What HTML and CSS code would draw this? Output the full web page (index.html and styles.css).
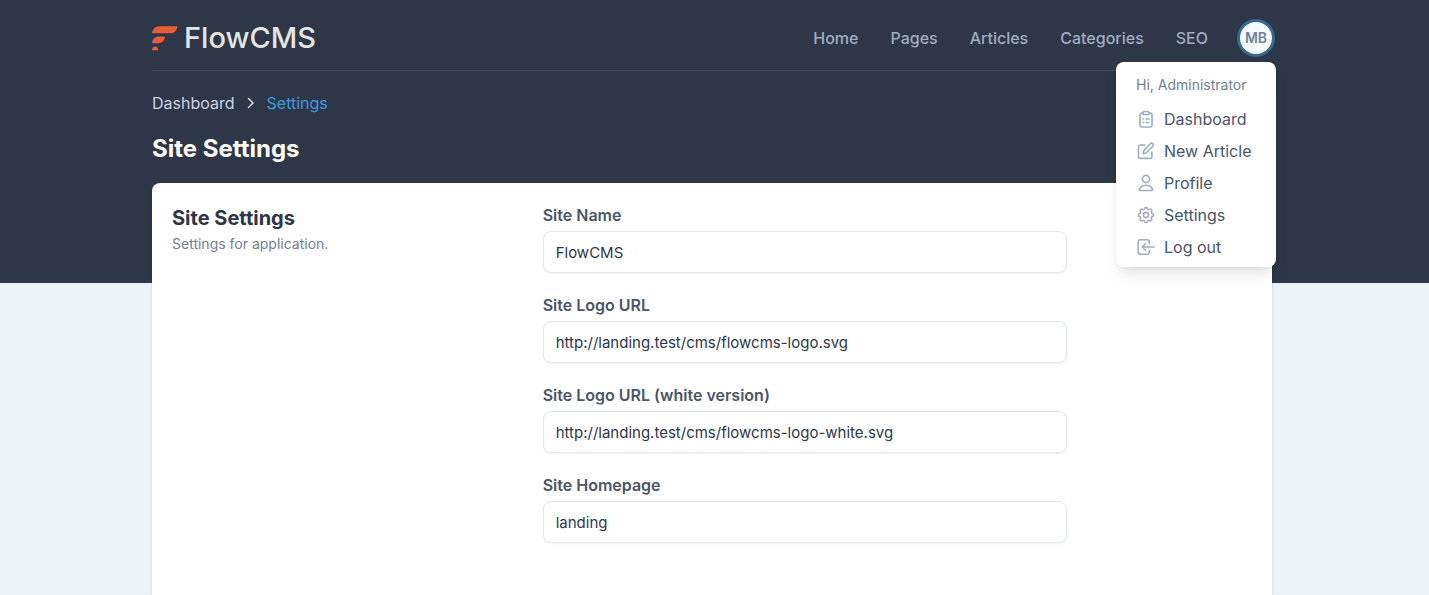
FILE: index.html
```html
<!DOCTYPE html>
<html lang="en">
<head>
<meta charset="utf-8">
<meta name="viewport" content="width=device-width, initial-scale=1">
<title>Site Settings - FlowCMS</title>
<link rel="stylesheet" href="styles.css">
</head>
<body>
<header class="masthead">
  <div class="container">
    <div class="topbar">
      <a class="brand" href="#">
        <svg class="brand-mark" viewBox="0 0 26 25" aria-hidden="true"><path d="M0 7.2C.6 3 3.2.2 7 .2H25.300C25 4.600 22.500 7.200 18.500 7.200ZM0 17.200C.6 13 3.200 10.400 7 10.400H13C12.500 14.700 10 17.200 6 17.200ZM0 24.200C0 22 1.200 20.600 3.200 20.600S6.200 22 6.200 24.200Z"/></svg>
        <span>FlowCMS</span>
      </a>
      <nav class="nav" aria-label="Main">
        <a href="#">Home</a>
        <a href="#">Pages</a>
        <a href="#">Articles</a>
        <a href="#">Categories</a>
        <a href="#">SEO</a>
        <div class="account">
          <button class="avatar" type="button" aria-label="Account menu" aria-expanded="true">MB</button>
          <div class="menu">
            <p class="menu-greeting">Hi, Administrator</p>
            <a href="#"><svg viewBox="0 0 18 18" aria-hidden="true"><path d="M6 3H5a2 2 0 0 0-2 2v10a2 2 0 0 0 2 2h8a2 2 0 0 0 2-2V5a2 2 0 0 0-2-2h-1M7.500 1.500h3A1.500 1.500 0 0 1 12 3v1.500H6V3a1.500 1.500 0 0 1 1.500-1.500ZM6 9h.5M9 9h3M6 12.500h.5M9 12.500h3"/></svg>Dashboard</a>
            <a href="#"><svg viewBox="0 0 18 18" aria-hidden="true"><path d="M8 3H3.200A1.700 1.700 0 0 0 1.500 4.700v10A1.700 1.700 0 0 0 3.200 16.400h10a1.700 1.700 0 0 0 1.700-1.700V10M13.300 1.800a1.700 1.700 0 0 1 2.500 2.500L9.200 11l-3 .8.700-3.200Z"/></svg>New Article</a>
            <a href="#"><svg viewBox="0 0 18 18" aria-hidden="true"><circle cx="9" cy="5" r="3.600"/><path d="M2.500 16.500c0-3.500 2.500-5.300 6.500-5.300s6.500 1.800 6.500 5.300Z"/></svg>Profile</a>
            <a href="#"><svg viewBox="0 0 18 18" aria-hidden="true"><path d="M7.600 2.500c.4-1.500 2.400-1.500 2.800 0 .2 1 1.300 1.400 2.200.9 1.300-.8 2.800.7 2 2-.5.900-.1 2 .9 2.200 1.500.4 1.500 2.400 0 2.800-1 .2-1.400 1.300-.9 2.200.8 1.300-.7 2.800-2 2-.9-.5-2-.1-2.200.9-.4 1.500-2.400 1.500-2.800 0-.2-1-1.300-1.400-2.200-.9-1.300.8-2.800-.7-2-2 .5-.9.100-2-.9-2.200-1.500-.4-1.500-2.400 0-2.800 1-.2 1.400-1.300.9-2.200-.8-1.300.7-2.800 2-2 .9.500 2 .1 2.200-.9Z"/><circle cx="9" cy="9" r="2.600"/></svg>Settings</a>
            <a href="#"><svg viewBox="0 0 18 18" aria-hidden="true"><path d="M12.300 5.500V4a2.300 2.300 0 0 0-2.300-2.300H3.500A2.300 2.300 0 0 0 1.200 4v10a2.300 2.300 0 0 0 2.300 2.300H10a2.300 2.300 0 0 0 2.300-2.300v-1.500M17 9H5.500M8.500 5.800 5.300 9l3.200 3.200"/></svg>Log out</a>
          </div>
        </div>
      </nav>
    </div>
    <nav class="breadcrumb" aria-label="Breadcrumb">
      <a href="#">Dashboard</a>
      <svg viewBox="0 0 8 12" aria-hidden="true"><path d="m1.500 1.500 4.500 4.500-4.500 4.500"/></svg>
      <a href="#" class="current" aria-current="page">Settings</a>
    </nav>
    <h1>Site Settings</h1>
  </div>
</header>
<main class="content">
  <section class="card">
    <div class="intro">
      <h2>Site Settings</h2>
      <p>Settings for application.</p>
    </div>
    <form class="fields">
      <div class="field">
        <label for="site-name">Site Name</label>
        <input id="site-name" type="text" value="FlowCMS">
      </div>
      <div class="field">
        <label for="logo-url">Site Logo URL</label>
        <input id="logo-url" type="text" value="http://landing.test/cms/flowcms-logo.svg">
      </div>
      <div class="field">
        <label for="logo-white">Site Logo URL (white version)</label>
        <input id="logo-white" type="text" value="http://landing.test/cms/flowcms-logo-white.svg">
      </div>
      <div class="field">
        <label for="homepage">Site Homepage</label>
        <input id="homepage" type="text" value="landing">
      </div>
    </form>
  </section>
</main>
</body>
</html>
```
FILE: styles.css
```css
* { box-sizing: border-box; }

html, body { height: 100%; }

body {
  margin: 0;
  display: flex;
  flex-direction: column;
  overflow: hidden;
  background: #edf2f7;
  color: #2d3748;
  font: 16px/24px Inter, "Liberation Sans", sans-serif;
}

h1, h2, p { margin: 0; }
a { color: inherit; text-decoration: none; }

.masthead, .content { padding-right: 5px; }

.masthead {
  background: #2d3748;
  padding-bottom: 118px;
}

.container,
.card {
  width: 100%;
  max-width: 1120px;
  margin: 0 auto;
}

.topbar {
  display: flex;
  align-items: center;
  justify-content: space-between;
  height: 71px;
  padding-top: 6px;
  border-bottom: 1px solid #3c475a;
}

.brand {
  display: flex;
  align-items: center;
  gap: 6px;
  color: #e5e5e5;
  font-size: 29px;
  font-weight: 500;
  line-height: 36px;
}
.brand-mark { width: 26px; height: 25px; fill: #e95d34; }

.nav {
  display: flex;
  align-items: center;
  gap: 32px;
  color: #a0aec0;
  font-weight: 500;
}

.account { position: relative; }
.avatar {
  display: block;
  width: 32px;
  height: 32px;
  padding: 0;
  border: 0;
  border-radius: 50%;
  background: #f7fafc;
  box-shadow: 0 0 0 3px #386995;
  color: #718096;
  font: 600 14px/32px Inter, "Liberation Sans", sans-serif;
}

.menu {
  position: absolute;
  top: 40px;
  right: -4px;
  z-index: 1;
  width: 160px;
  padding: 12px 0 4px;
  border-radius: 8px;
  background: #fff;
  box-shadow: 0 10px 15px -3px rgba(0, 0, 0, .1), 0 4px 6px -2px rgba(0, 0, 0, .05);
  color: #4a5568;
  font-weight: 400;
}
.menu-greeting {
  padding: 0 20px 7px;
  color: #718096;
  font-size: 14px;
  line-height: 22px;
}
.menu a {
  display: flex;
  align-items: center;
  gap: 9px;
  height: 32px;
  padding-left: 21px;
}
.menu svg {
  width: 18px;
  height: 18px;
  fill: none;
  stroke: #a0aec0;
  stroke-width: 1.6;
  stroke-linecap: round;
  stroke-linejoin: round;
}

.breadcrumb {
  display: flex;
  align-items: center;
  gap: 12px;
  padding-top: 20px;
  color: #cbd5e0;
}
.breadcrumb svg {
  width: 8px;
  height: 12px;
  fill: none;
  stroke: #e2e8f0;
  stroke-width: 1.5;
  stroke-linecap: round;
  stroke-linejoin: round;
}
.breadcrumb .current { color: #4299e1; }

h1 {
  margin-top: 18px;
  color: #fff;
  font-size: 24px;
  font-weight: 700;
  line-height: 32px;
}

.content {
  display: flex;
  flex: 1 0 auto;
  margin-top: -100px;
}

.card {
  display: grid;
  grid-template-columns: 1fr 2fr;
  gap: 16px;
  padding: 20px;
  border-radius: 8px 8px 0 0;
  background: #fff;
  box-shadow: 0 1px 3px rgba(0, 0, 0, .1), 0 1px 2px rgba(0, 0, 0, .06);
}

h2 {
  font-size: 20px;
  font-weight: 700;
  line-height: 30px;
}
.intro p {
  color: #718096;
  font-size: 14px;
  line-height: 22px;
}

.fields {
  display: grid;
  grid-template-columns: repeat(4, 1fr);
  align-content: start;
  gap: 20px 32px;
}
.field {
  grid-column: span 3;
  display: grid;
  gap: 4px;
}
.field label {
  color: #4a5568;
  font-weight: 600;
}
.field input {
  width: 100%;
  height: 42px;
  padding: 0 12px;
  border: 1px solid #e2e8f0;
  border-radius: 8px;
  background: #fff;
  box-shadow: 0 1px 2px rgba(0, 0, 0, .05);
  color: #2d3748;
  font: 15px/24px Inter, "Liberation Sans", sans-serif;
}
```
